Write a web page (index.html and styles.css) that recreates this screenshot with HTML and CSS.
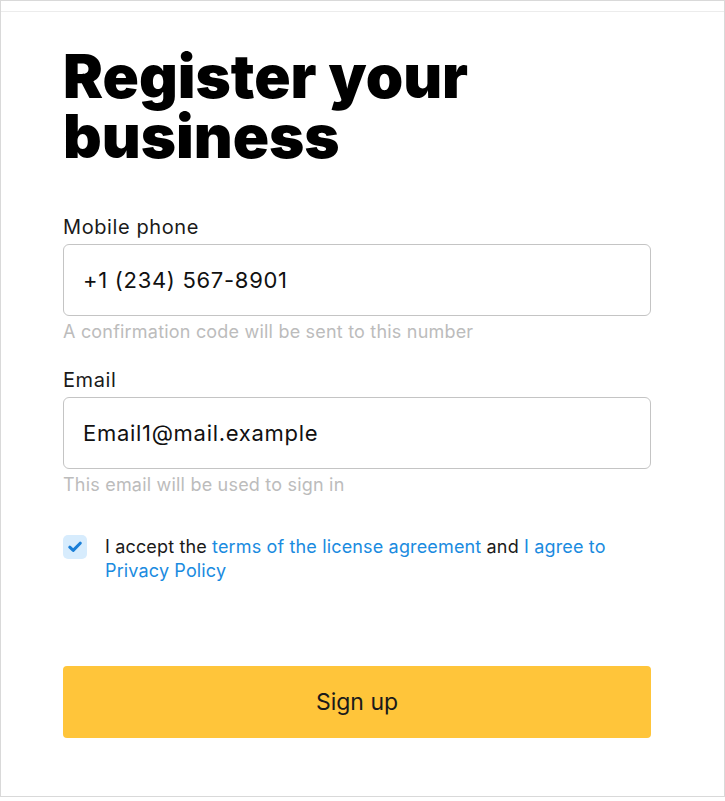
FILE: index.html
```html
<!DOCTYPE html>
<html lang="en">
<head>
<meta charset="utf-8">
<title>Register your business</title>
<link rel="stylesheet" href="styles.css">
</head>
<body>
<div class="frame">
  <div class="topline"></div>
  <main class="content">
    <h1 class="title">Register your<br>business</h1>
    <form class="form">
      <div class="field">
        <label class="label" for="phone">Mobile phone</label>
        <input class="input" id="phone" type="text" value="+1 (234) 567-8901">
        <div class="hint">A confirmation code will be sent to this number</div>
      </div>
      <div class="field">
        <label class="label" for="email">Email</label>
        <input class="input" id="email" type="text" value="Email1@mail.example">
        <div class="hint">This email will be used to sign in</div>
      </div>
      <div class="agree">
        <span class="check">
          <svg width="14" height="12" viewBox="0 0 14 12"><path d="M1.8 6.2 L5.2 9.4 L12.2 2.2" fill="none" stroke="#1a7fd8" stroke-width="3" stroke-linecap="round" stroke-linejoin="round"/></svg>
        </span>
        <p class="agree-text">I accept the <a class="link" href="#">terms of the license agreement</a> and <a class="link" href="#">I agree to Privacy Policy</a></p>
      </div>
      <button class="submit" type="button">Sign up</button>
    </form>
  </main>
</div>
</body>
</html>
```
FILE: styles.css
```css
* { box-sizing: border-box; }
html, body { margin: 0; padding: 0; background: #fff; }
body { font-family: Inter, "Noto Sans", sans-serif; color: #111; }
.frame {
  width: 725px;
  height: 797px;
  border: 1px solid #d9d9d9;
}
.topline { height: 11px; border-bottom: 1px solid #ececec; }
.content { padding: 0 73px 0 62px; }
.title {
  margin: 34px 0 0 0;
  font-family: Inter, sans-serif;
  font-weight: 900;
  font-size: 60px;
  line-height: 60px;
  letter-spacing: 0;
  color: #000;
}
.form { margin-top: 48px; }
.field { display: flex; flex-direction: column; margin-bottom: 24px; }
.label { font-size: 20px; line-height: 26px; letter-spacing: 0.6px; color: #1a1a1a; margin-bottom: 4px; }
.input {
  height: 72px;
  border: 1px solid #c4c4c4;
  border-radius: 6px;
  padding: 0 19px;
  font-family: Inter, sans-serif;
  font-size: 22px;
  letter-spacing: 0.7px;
  color: #111;
  background: #fff;
  outline: none;
}
.hint { font-size: 18px; line-height: 22px; letter-spacing: 0.2px; color: #bcbcbc; margin-top: 5px; }
.agree { display: flex; align-items: flex-start; gap: 18px; margin-top: 39px; }
.check {
  flex: none;
  width: 24px; height: 24px;
  border-radius: 5px;
  background: #d7ecfd;
  display: flex; align-items: center; justify-content: center;
  margin-top: 0;
}
.agree-text { margin: 0; font-size: 18px; line-height: 24px; letter-spacing: 0.15px; color: #1a1a1a; }
.link { color: #1a8be0; text-decoration: none; }
.submit {
  display: block;
  width: 100%;
  height: 72px;
  margin-top: 83px;
  border: none;
  border-radius: 4px;
  background: #ffc53a;
  font-family: Inter, sans-serif;
  font-size: 23px;
  color: #1a1a1a;
}
```
